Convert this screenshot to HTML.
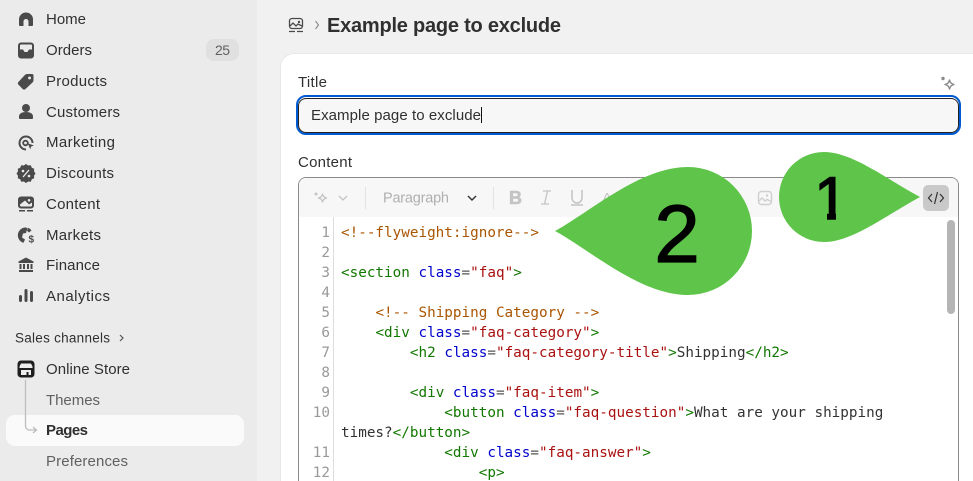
<!DOCTYPE html>
<html style="width:973px;height:481px;overflow:hidden"><head><meta charset="utf-8"><style>
html,body{margin:0;padding:0}
body{width:973px;height:481px;overflow:hidden;position:relative;background:#f1f1f1;font-family:"Liberation Sans",sans-serif}
div{position:absolute;box-sizing:border-box}
#p{left:0;top:0;width:973px;height:481px;overflow:hidden}
.c{font:14.3px/20px "DejaVu Sans Mono",monospace;white-space:pre;left:341px;color:#333}
.n{font:14.3px/20px "DejaVu Sans Mono",monospace;left:300px;width:30px;text-align:right;color:#999}
.k{color:#a50}.t{color:#170}.a{color:#00c}.s{color:#a11}.e{color:#555}
svg{position:absolute;left:0;top:0;display:block}
</style></head><body><div id="p">
<div style="left:0;top:0;width:257px;height:481px;background:#ebebeb"></div>
<div style="left:206px;top:39px;width:33px;height:22px;background:#e0e0e0;border-radius:8px"></div>
<div style="left:6px;top:415px;width:238px;height:31px;background:#fafafa;border-radius:9px"></div>
<div style="left:280px;top:53px;width:693px;height:428px;background:#fff;border-radius:14px 0 0 0;border-top:1px solid #e8e8e8;border-left:1px solid #e8e8e8"></div>
<div style="left:296px;top:95px;width:665px;height:40px;border:2px solid #005bd3;border-radius:10px;background:#fff"></div>
<div style="left:298px;top:98px;width:661px;height:35px;border:1px solid #222;border-radius:8px;background:#f7f7f7"></div>
<div style="left:481px;top:107px;width:1px;height:16px;background:#111"></div>
<div style="left:298px;top:177px;width:661px;height:304px;border:1px solid #8a8a8a;border-bottom:0;border-radius:8px 8px 0 0;background:#fff"></div>
<div style="left:299px;top:178px;width:659px;height:39px;background:#f7f7f7;border-radius:7px 7px 0 0"></div>
<div style="left:333px;top:217px;width:1px;height:264px;background:#ddd"></div>
<div style="left:923px;top:185px;width:26px;height:26px;background:#c9c9c9;border-radius:5px"></div>
<div style="left:947px;top:220px;width:8px;height:94px;background:#b5b5b5;border-radius:4px"></div>

<div class="n" style="top:223px">1</div>
<div class="n" style="top:243px">2</div>
<div class="n" style="top:263px">3</div>
<div class="n" style="top:283px">4</div>
<div class="n" style="top:303px">5</div>
<div class="n" style="top:323px">6</div>
<div class="n" style="top:343px">7</div>
<div class="n" style="top:363px">8</div>
<div class="n" style="top:383px">9</div>
<div class="n" style="top:403px">10</div>
<div class="n" style="top:443px">11</div>
<div class="n" style="top:463px;height:18px;overflow:hidden">12</div>

<div class="c" style="top:223px"><span class="k">&lt;!--flyweight:ignore--&gt;</span></div>
<div class="c" style="top:263px"><span class="t">&lt;section</span> <span class="a">class</span><span class="e">=</span><span class="s">"faq"</span><span class="t">&gt;</span></div>
<div class="c" style="top:303px">    <span class="k">&lt;!-- Shipping Category --&gt;</span></div>
<div class="c" style="top:323px">    <span class="t">&lt;div</span> <span class="a">class</span><span class="e">=</span><span class="s">"faq-category"</span><span class="t">&gt;</span></div>
<div class="c" style="top:343px">        <span class="t">&lt;h2</span> <span class="a">class</span><span class="e">=</span><span class="s">"faq-category-title"</span><span class="t">&gt;</span>Shipping<span class="t">&lt;/h2&gt;</span></div>
<div class="c" style="top:383px">        <span class="t">&lt;div</span> <span class="a">class</span><span class="e">=</span><span class="s">"faq-item"</span><span class="t">&gt;</span></div>
<div class="c" style="top:403px">            <span class="t">&lt;button</span> <span class="a">class</span><span class="e">=</span><span class="s">"faq-question"</span><span class="t">&gt;</span>What are your shipping</div>
<div class="c" style="top:423px">times?<span class="t">&lt;/button&gt;</span></div>
<div class="c" style="top:443px">            <span class="t">&lt;div</span> <span class="a">class</span><span class="e">=</span><span class="s">"faq-answer"</span><span class="t">&gt;</span></div>
<div class="c" style="top:463px;height:18px;overflow:hidden">                <span class="t">&lt;p&gt;</span></div>

<svg width="973" height="481" viewBox="0 0 973 481" font-family="Liberation Sans, sans-serif" font-size="15" fill="#303030">
<text x="46" y="24" textLength="40">Home</text>
<text x="46" y="55" textLength="46">Orders</text>
<text x="46" y="86" textLength="61">Products</text>
<text x="46" y="117" textLength="74">Customers</text>
<text x="46" y="147" textLength="69">Marketing</text>
<text x="46" y="178" textLength="68">Discounts</text>
<text x="46" y="209" textLength="54">Content</text>
<text x="46" y="240" textLength="55">Markets</text>
<text x="46" y="270" textLength="54">Finance</text>
<text x="46" y="301" textLength="64">Analytics</text>
<text x="15" y="342.500" font-size="13.500" textLength="95">Sales channels</text>
<text x="46" y="374" textLength="84">Online Store</text>
<text x="46" y="405" textLength="54" fill="#616161">Themes</text>
<text x="46" y="435" textLength="42" font-weight="bold">Pages</text>
<text x="46" y="466" textLength="82" fill="#616161">Preferences</text>
<text x="215" y="55" font-size="14" textLength="15" fill="#616161">25</text>
<text x="327" y="32" font-size="20" font-weight="bold" textLength="234">Example page to exclude</text>
<text x="298" y="87" textLength="29">Title</text>
<text x="298" y="167" textLength="54">Content</text>
<text x="311" y="120" textLength="170">Example page to exclude</text>
<text x="383" y="202.500" font-size="14.500" textLength="66" fill="#b0b0b0">Paragraph</text>
<!-- sidebar icons -->
<g fill="#4a4a4a">
<path d="M19 19.500a7 7 0 0 1 14 0V25a1 1 0 0 1-1 1H28.500V21.500a2.500 2.500 0 0 0-5 0V26H20a1 1 0 0 1-1-1Z"/>
<path fill-rule="evenodd" d="M21 42.500h10a3 3 0 0 1 3 3v10a3 3 0 0 1-3 3H21a3 3 0 0 1-3-3v-10a3 3 0 0 1 3-3Zm0 2a1 1 0 0 0-1 1v4h3l1.500 2.500h3L29 49.500h3v-4a1 1 0 0 0-1-1Z"/>
<path fill-rule="evenodd" d="M27 74h5a1.500 1.500 0 0 1 1.500 1.500v5a3 3 0 0 1-1 2l-7 6.500a2 2 0 0 1-2.800 0l-4.200-4.300a2 2 0 0 1 0-2.800l6.500-7a3 3 0 0 1 2.500-.9Zm2.500 2.500a1.500 1.500 0 1 0 .1 0Z"/>
<circle cx="26" cy="108" r="4"/><path d="M19 118v-1.500c0-3 3-4.500 7-4.500s7 1.500 7 4.500V118a1 1 0 0 1-1 1H20a1 1 0 0 1-1-1Z"/>
<path d="M27 142.500l8 3-3.500 1.300-1.300 3.500Z" stroke="#ebebeb" stroke-width=".8"/>
<path fill-rule="evenodd" d="M26 164l2.200 1.500 2.600-.2 1 2.400 2.400 1-.2 2.600 1.500 2.200-1.500 2.200.2 2.600-2.400 1-1 2.400-2.600-.2-2.200 1.500-2.200-1.500-2.600.2-1-2.400-2.400-1 .2-2.600-1.500-2.200 1.500-2.200-.2-2.600 2.400-1 1-2.400 2.600.2Z"/>
<path fill-rule="evenodd" d="M21 197h10a3 3 0 0 1 3 3v6a3 3 0 0 1-3 3H21a3 3 0 0 1-3-3v-6a3 3 0 0 1 3-3Zm-1 8v1a1 1 0 0 0 1 1h10a1 1 0 0 0 1-1v-3l-3 2-4-4Zm9-5.500a1.300 1.300 0 1 0 .1 0Z" transform="translate(0 -.5)"/>
<rect x="19" y="210" width="6" height="1.500"/><rect x="27" y="210" width="6" height="1.500"/>
<path d="M25.500 227.500a7.800 7.800 0 0 0-2 15.300l1.500-3.300-3-2 1-4 3-.5 1.500-5Zm2.500 .3l-1 3 2 1.700 2.500-2a7.800 7.800 0 0 0-3.500-2.700Z"/>
<path d="M26 257.500l7.500 4v1.500h-15v-1.500Z M19.500 264h2v5h-2Z M23 264h2v5h-2Z M27 264h2v5h-2Z M30.500 264h2v5h-2Z M19 270h14v2H19Z"/>
<rect x="19" y="295" width="3" height="7" rx="1.500"/><rect x="24.500" y="289" width="3" height="13" rx="1.500"/><rect x="30" y="291" width="3" height="11" rx="1.500"/>
</g>
<g fill="none" stroke="#4a4a4a">
<path d="M26 149.500a6.500 6.500 0 1 1 6.500-6.500" stroke-width="2"/><circle cx="25.500" cy="143" r="2.300" stroke-width="1.800"/>
</g>
<text x="28.500" y="242.500" font-size="10" font-weight="bold" fill="#4a4a4a">$</text>
<path d="M23 177l6-7" stroke="#ebebeb" stroke-width="1.300"/><circle cx="23" cy="171" r="1.300" fill="#ebebeb"/><circle cx="29" cy="176" r="1.300" fill="#ebebeb"/>
<path d="M120 335l3 3-3 3" fill="none" stroke="#555" stroke-width="1.200"/>
<!-- online store icon -->
<rect x="17.500" y="360.500" width="17" height="17" rx="3.500" fill="#1f1f1f"/>
<path d="M21 363.500h10l1.500 3v1.500h-13v-1.500Z" fill="#eee"/><path d="M21 370h10v5h-2.500v-3h-2v3H21Z" fill="#eee"/>
<path d="M25.500 380V426a4 4 0 0 0 4 4H36m-3-3l3.500 3-3.500 3" fill="none" stroke="#bdbdbd" stroke-width="1.300"/>
<!-- breadcrumb -->
<g fill="none" stroke="#4a4a4a" stroke-width="1.300"><rect x="289.500" y="18.500" width="13" height="10" rx="2.500"/><path d="M290 26l3-3 3 3 2-2 4 2"/></g>
<circle cx="299" cy="22" r="1.200" fill="#4a4a4a"/><path d="M289 31.500h6M297 31.500h6" stroke="#4a4a4a" stroke-width="1.300"/>
<path d="M315.500 21l3 4-3 4" fill="none" stroke="#8a8a8a" stroke-width="1.100"/>
<!-- sparkle title -->
<circle cx="943" cy="78.500" r="1.700" fill="#8a8a8a"/>
<path d="M949.500 80c.8 2.800 1.600 3.600 4.500 4.500-2.900.9-3.700 1.700-4.500 4.500-.8-2.800-1.600-3.600-4.500-4.500 2.900-.9 3.700-1.700 4.500-4.500Z" fill="none" stroke="#8a8a8a" stroke-width="1.400" stroke-linejoin="round"/>
<!-- toolbar -->
<circle cx="316" cy="194" r="1.500" fill="#c4c4c4"/>
<path d="M322.500 194c.7 2.500 1.400 3.200 4 4-2.600.8-3.300 1.500-4 4-.7-2.500-1.400-3.200-4-4 2.600-.8 3.300-1.500 4-4Z" fill="none" stroke="#c4c4c4" stroke-width="1.300" stroke-linejoin="round"/>
<path d="M339 196l4 4 4-4" fill="none" stroke="#c4c4c4" stroke-width="1.300"/>
<path d="M365.500 187v22M493.500 187v22" stroke="#e3e3e3"/>
<path d="M468 196l4 4 4-4" fill="none" stroke="#303030" stroke-width="1.400"/>
<text x="509" y="204" font-size="18" font-weight="bold" fill="#c4c4c4" stroke="#c4c4c4" stroke-width=".6">B</text>
<path d="M543 191h8M541 204h8M547.500 191l-3 13" stroke="#c4c4c4" stroke-width="1.300" fill="none"/>
<path d="M572 190v8a5 5 0 0 0 10 0v-8M571 205h12" stroke="#c4c4c4" stroke-width="1.500" fill="none"/>
<text x="602" y="203" font-size="15" fill="#c4c4c4">A</text>
<g fill="none" stroke="#cfcfcf" stroke-width="1.400"><rect x="758.500" y="191.500" width="13" height="13" rx="3"/><path d="M759 201l3-3 3 3 2-1.500 4 2"/></g>
<circle cx="767" cy="195.500" r="1.200" fill="#cfcfcf"/>
<!-- code button -->
<path d="M932 194l-3.500 4 3.500 4M940 194l3.500 4-3.500 4M937.500 192l-3 12" fill="none" stroke="#333" stroke-width="1.200"/>
<!-- pins -->
<path d="M555 231C590 212 640 167 688 167a64 64 0 0 1 0 128C640 295 590 250 555 231Z" fill="#5fc54a"/>
<path d="M920 197C885 178 852 152 824 152a45 45 0 0 0 0 90C852 242 885 216 920 197Z" fill="#5fc54a"/>
<text x="677" y="262" font-size="82" text-anchor="middle" fill="#000" stroke="#000" stroke-width="1.200">2</text>
<text x="831" y="219" font-size="60" text-anchor="middle" fill="#000" stroke="#000" stroke-width="1.500">1</text>
<rect x="812" y="212.500" width="15" height="8" fill="#5fc54a"/>
<rect x="836" y="212.500" width="14" height="8" fill="#5fc54a"/>
</svg>
</div></body></html>
